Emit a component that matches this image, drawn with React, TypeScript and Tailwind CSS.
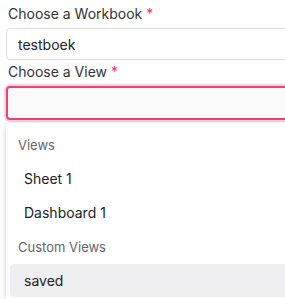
const views = ["Sheet 1", "Dashboard 1"];

function Label({ text }: { text: string }) {
  return (
    <div className="h-[20px] leading-[20px] text-[14px] text-[#333]">
      {text} <span className="text-[#e8336d]">*</span>
    </div>
  );
}

export default function App() {
  return (
    <div
      className="w-[285px] h-[299px] overflow-hidden bg-white"
      style={{ fontFamily: "Inter, 'Noto Sans', sans-serif" }}
    >
      <div className="w-[360px] pl-[6px] pt-[4px]">
        <div className="pl-[2px]">
          <Label text="Choose a Workbook" />
        </div>
        <div className="mt-[4px] h-[32px] rounded-[4px] border border-[#dcdcdc] flex items-center pl-[11px] text-[14px] text-[#222]">
          testboek
        </div>
        <div className="mt-[2px] pl-[2px]">
          <Label text="Choose a View" />
        </div>
        <div className="mt-[4px] h-[34px] rounded-[4px] border-2 border-[#e8447a] bg-[#fafafa] shadow-[0_0_0_2px_#fbd3e0]" />
        <div className="mt-[3px] rounded-[4px] bg-white shadow-[0_1px_6px_rgba(0,0,0,0.18)] px-[4px] pt-[4px] pb-[4px]">
          <div className="h-[34px] flex items-center pt-[4px] pl-[8px] text-[13px] text-[#666]">
            Views
          </div>
          {views.map((v) => (
            <div
              key={v}
              className="h-[34px] flex items-center pl-[14px] text-[14px] text-[#222]"
            >
              {v}
            </div>
          ))}
          <div className="h-[35px] flex items-center pt-[2px] pl-[8px] text-[13px] text-[#666]">
            Custom Views
          </div>
          <div className="h-[33px] flex items-center pl-[14px] text-[14px] text-[#222] bg-[#efeff1] rounded-[4px]">
            saved
          </div>
        </div>
      </div>
    </div>
  );
}
